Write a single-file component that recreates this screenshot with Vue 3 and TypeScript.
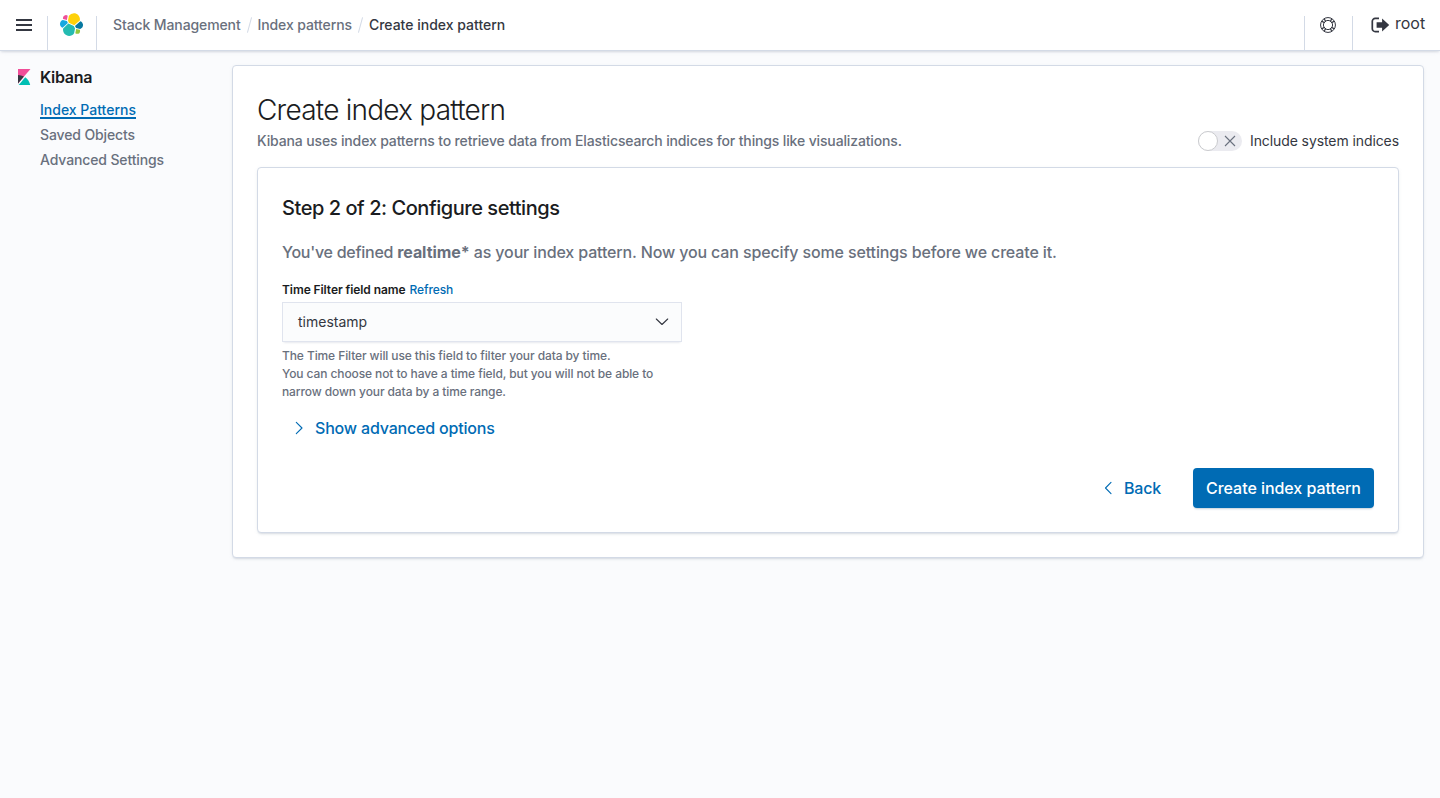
<script setup lang="ts">
import { ref } from 'vue'

const crumbs: string[] = ['Stack Management', 'Index patterns', 'Create index pattern']
const navItems: string[] = ['Index Patterns', 'Saved Objects', 'Advanced Settings']
const activeItem = ref('Index Patterns')
const includeSystem = ref(false)
</script>

<template>
  <div class="page">
    <header class="header">
      <button class="menu" aria-label="Toggle navigation">
        <svg width="16" height="12" viewBox="0 0 16 12"><path fill="#343741" d="M0 0h16v2H0zM0 5h16v2H0zM0 10h16v2H0z" /></svg>
      </button>
      <a class="logo" aria-label="Elastic home">
        <svg width="25" height="25" viewBox="0 0 32 32">
          <path fill="#FED10A" d="M12.58 13.787l7.002 3.211 7.066-6.213a7.849 7.849 0 00.152-1.557c0-4.287-3.464-7.77-7.72-7.77a7.702 7.702 0 00-6.379 3.39l-1.176 6.126z" />
          <path fill="#24BBB1" d="M5.333 21.228a7.964 7.964 0 00-.153 1.575c0 4.3 3.474 7.793 7.75 7.793 2.573 0 4.979-1.284 6.42-3.427l1.166-6.109-1.557-2.992-7.03-3.217z" />
          <path fill="#EF5098" d="M5.288 9.067l4.8 1.137L11.14 4.72a3.785 3.785 0 00-6.083 3.025c0 .455.08.9.231 1.322" />
          <path fill="#17A8E0" d="M4.872 10.214c-2.145.713-3.642 2.776-3.642 5.05 0 2.214 1.362 4.192 3.408 4.975l6.734-6.12-1.236-2.656z" />
          <path fill="#93C83E" d="M20.873 27.169a3.77 3.77 0 002.304.792 3.794 3.794 0 003.788-3.8c0-.463-.081-.912-.233-1.34l-4.794-1.127z" />
          <path fill="#0779A1" d="M21.848 20.563l5.28 1.242c2.144-.714 3.642-2.776 3.642-5.05 0-2.21-1.365-4.184-3.415-4.966l-6.904 6.09z" />
        </svg>
      </a>
      <nav class="crumbs">
        <template v-for="(crumb, i) in crumbs" :key="crumb">
          <span v-if="i > 0" class="slash"></span>
          <span class="crumb" :class="{ current: i === crumbs.length - 1 }">{{ crumb }}</span>
        </template>
      </nav>
      <button class="help" aria-label="Help">
        <svg width="16" height="16" viewBox="0 0 16 16" fill="none" stroke="#343741">
          <circle cx="8" cy="8" r="7.45" /><circle cx="8" cy="8" r="4.6" />
          <path stroke-width="1.2" d="M1.9 4.4l2.9 1.3M4.4 1.9l1.3 2.9M14.1 4.4l-2.9 1.3M11.6 1.9l-1.3 2.9M1.9 11.6l2.9-1.3M4.4 14.1l1.3-2.9M14.1 11.6l-2.9-1.3M11.6 14.1l-1.3-2.9" />
        </svg>
      </button>
      <button class="user">
        <svg width="19" height="16" viewBox="0 0 19 16">
          <path fill="none" stroke="#343741" stroke-width="1.7" d="M8 1.4H4.2A2.9 2.9 0 0 0 1.3 4.3v7.4a2.9 2.9 0 0 0 2.9 2.9H8" />
          <path fill="#343741" d="M5.6 5.2h5.5V1.4L18.2 8l-7.1 6.6v-3.8H5.6z" />
        </svg>
        <span>root</span>
      </button>
    </header>

    <div class="body">
      <aside class="sidebar">
        <div class="section">
          <svg width="16" height="16" viewBox="0 0 32 32">
            <path fill="#F04E98" d="M4 0v28.789L28.935.017z" />
            <path fill="#343741" d="M4 12v16.789l11.906-13.738A24.721 24.721 0 004 12" />
            <path fill="#00BFB3" d="M18.479 16.664L6.268 30.754l-1.073 1.237h23.191c-1.252-6.292-4.883-11.719-9.908-15.327" />
          </svg>
          <span>Kibana</span>
        </div>
        <ul class="nav">
          <li v-for="item in navItems" :key="item">
            <a :class="{ active: item === activeItem }" @click="activeItem = item">{{ item }}</a>
          </li>
        </ul>
      </aside>

      <main class="panel outer">
        <h1>Create index pattern</h1>
        <div class="intro">
          <p>Kibana uses index patterns to retrieve data from Elasticsearch indices for things like visualizations.</p>
          <label class="switch" @click="includeSystem = !includeSystem">
            <span class="track" :class="{ on: includeSystem }">
              <span class="thumb"></span>
              <svg width="12" height="12" viewBox="0 0 12 12"><path stroke="#69707D" stroke-width="1.1" d="M1 1l10 10M11 1L1 11" /></svg>
            </span>
            <span class="switch-label">Include system indices</span>
          </label>
        </div>

        <section class="panel inner">
          <h2>Step 2 of 2: Configure settings</h2>
          <p class="lead"><span class="opening">You've defined </span><strong>realtime*</strong> as your index pattern. Now you can specify some settings before we create it.</p>
          <div class="field-label"><span class="name">Time Filter field name</span><a>Refresh</a></div>
          <div class="select">
            <span>timestamp</span>
            <svg width="14" height="8" viewBox="0 0 14 8"><path fill="none" stroke="#343741" stroke-width="1.1" stroke-linecap="round" stroke-linejoin="round" d="M1.3 1l5.7 5.5L12.7 1" /></svg>
          </div>
          <div class="hint">
            <div>The Time Filter will use this field to filter your data by time.</div>
            <div>You can choose not to have a time field, but you will not be able to</div>
            <div>narrow down your data by a time range.</div>
          </div>
          <button class="link advanced">
            <svg width="8" height="14" viewBox="0 0 8 14"><path fill="none" stroke="#006BB4" stroke-width="1.1" stroke-linecap="round" stroke-linejoin="round" d="M1.3 1.3L7 7l-5.7 5.7" /></svg>
            <span>Show advanced options</span>
          </button>
          <div class="actions">
            <button class="link back">
              <svg width="8" height="14" viewBox="0 0 8 14"><path fill="none" stroke="#006BB4" stroke-width="1.1" stroke-linecap="round" stroke-linejoin="round" d="M7 1.3L1.5 7 7 12.7" /></svg>
              <span>Back</span>
            </button>
            <button class="primary">Create index pattern</button>
          </div>
        </section>
      </main>
    </div>
  </div>
</template>

<style>
body { background: #fafbfd; }
</style>

<style scoped>
.page { height: 798px; overflow: hidden; background: #fafbfd; color: #343741; font-family: Inter, "Liberation Sans", sans-serif; font-size: 14px; font-weight: 450; letter-spacing: -.1px; }
.page * { box-sizing: border-box; }
h1, h2, p, ul { margin: 0; padding: 0; }
svg { display: block; flex: none; }
button { margin: 0; padding: 0; border: 0; background: none; color: inherit; font-family: inherit; font-weight: inherit; letter-spacing: inherit; }
span, a, p, h1, h2 { white-space: nowrap; }

.header { position: relative; display: flex; align-items: flex-end; height: 51px; background: #fff; border-bottom: 1px solid #d3dae6; box-shadow: 0 2px 2px -1px rgba(152, 162, 179, .3), 0 1px 5px -2px rgba(152, 162, 179, .3); }
.menu { width: 48px; height: 34px; padding: 3px 16px 0; display: flex; border-right: 1px solid #d3dae6; }
.logo { width: 49px; height: 34px; display: flex; padding-left: 11px; border-right: 1px solid #d3dae6; }
.logo svg { margin-top: -4.5px; }
.crumbs { display: flex; align-items: center; height: 50px; margin-left: 16px; flex: 1; }
.crumb { color: #69707d; line-height: 20px; letter-spacing: -.11px; }
.crumb.current { color: #343741; font-weight: 500; letter-spacing: 0; }
.slash { width: 1px; height: 16px; margin: 0 8px; background: #d3dae6; transform: rotate(15deg); }
.help { width: 49px; height: 34px; display: flex; justify-content: center; border: solid #d3dae6; border-width: 0 1px; }
.help svg { margin: 1px 2px 0 0; }
.user { width: 87px; height: 50px; display: flex; align-items: center; padding-left: 18px; font-size: 16px; font-weight: 400; letter-spacing: 0; line-height: 24px; }
.user span { margin: -4px 0 0 5px; }

.body { display: flex; align-items: flex-start; padding: 14px 16px 0; }
.sidebar { width: 216px; }
.section { display: flex; align-items: center; gap: 8px; height: 24px; font-size: 16px; font-weight: 600; color: #1a1c21; letter-spacing: -.3px; }
.nav { list-style: none; padding: 8px 0 0 24px; }
.nav li { height: 25px; line-height: 25px; }
.nav a { color: #69707d; letter-spacing: -.13px; }
.nav a.active { color: #006bb4; font-weight: 550; letter-spacing: 0; text-decoration: underline; text-decoration-thickness: 1.5px; text-underline-offset: 2px; }

.panel { background: #fff; border: 1px solid #d3dae6; border-radius: 4px; box-shadow: 0 2px 2px -1px rgba(152, 162, 179, .3), 0 1px 5px -2px rgba(152, 162, 179, .3); }
.outer { flex: 1; height: 493px; padding: 24px; }
h1 { font-size: 28px; font-weight: 300; line-height: 40px; color: #1a1c21; letter-spacing: -.77px; }
.intro { display: flex; justify-content: space-between; align-items: center; height: 22px; color: #69707d; }
.intro p { line-height: 20px; margin-top: -1px; letter-spacing: -.14px; }
.switch { display: flex; align-items: center; color: #343741; }
.switch-label { line-height: 20px; margin-top: -1px; font-weight: 420; letter-spacing: -.09px; }
.track { position: relative; width: 44px; height: 20px; border-radius: 10px; background: #ebebf0; margin-right: 8px; }
.thumb { position: absolute; left: 0; top: 0; width: 20px; height: 20px; border-radius: 50%; background: #fff; border: 1px solid #cacbce; }
.track svg { position: absolute; left: 26px; top: 4px; }
.track.on { background: #006bb4; }
.track.on .thumb { left: 24px; }
.track.on svg { left: 6px; }
.inner { height: 366px; margin-top: 15px; padding: 24px; }
h2 { font-size: 20px; font-weight: 500; line-height: 32px; color: #1a1c21; letter-spacing: -.45px; }
.lead { margin-top: 16px; font-size: 16px; line-height: 24px; color: #69707d; letter-spacing: -.14px; }
.lead .opening { letter-spacing: -.27px; }
.lead strong { font-weight: 750; letter-spacing: -.05px; }
.field-label { display: flex; gap: 4px; margin-top: 17px; height: 18px; font-size: 12px; line-height: 18px; color: #006bb4; }
.field-label .name { color: #1a1c21; font-weight: 600; letter-spacing: -.08px; }
.select { width: 400px; height: 40px; margin-top: 3px; padding: 0 12px 0 15px; display: flex; align-items: center; justify-content: space-between; background: #fbfcfd; border: 1px solid #e0e4ee; box-shadow: 0 1px 1px -1px rgba(152, 162, 179, .2), 0 3px 2px -2px rgba(152, 162, 179, .2); }
.select span { line-height: 20px; margin-top: -1px; font-weight: 420; letter-spacing: 0; }
.hint { margin-top: 5px; font-size: 12px; line-height: 18px; color: #69707d; white-space: nowrap; }
.link { display: flex; align-items: center; color: #006bb4; font-size: 16px; font-weight: 500; height: 40px; letter-spacing: -.18px; }
.advanced { margin: 7px 0 0 13px; gap: 12px; }
.actions { display: flex; justify-content: flex-end; margin-top: 20px; }
.back { gap: 12px; margin-right: 32px; }
.primary { width: 181px; height: 40px; border-radius: 4px; background: #006bb4; color: #fff; font-size: 16px; font-weight: 500; letter-spacing: -.05px; box-shadow: 0 2px 2px -1px rgba(54, 97, 126, .3); white-space: nowrap; }
</style>
